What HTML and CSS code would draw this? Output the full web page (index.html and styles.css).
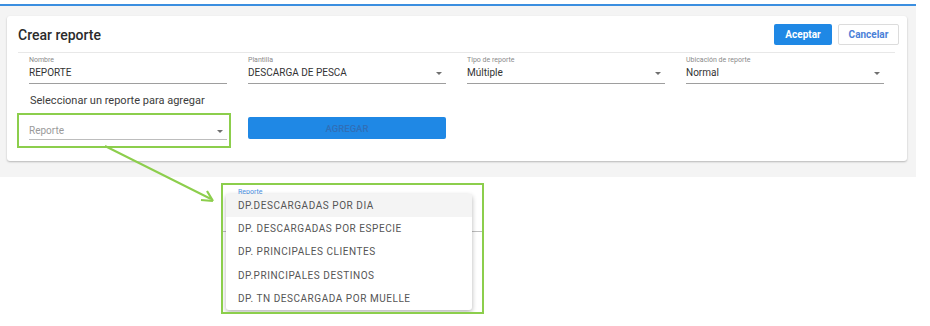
FILE: index.html
```html
<!DOCTYPE html>
<html lang="es">
<head>
    <meta charset="UTF-8">
    <title>Crear reporte</title>
    <link rel="stylesheet" href="styles.css">
</head>
<body>
    <div class="topline"></div>
    <div class="page">
        <div class="card">
            <div class="card-head">
                <h2>Crear reporte</h2>
                <div class="actions">
                    <button class="btn btn-primary">Aceptar</button>
                    <button class="btn btn-outline">Cancelar</button>
                </div>
            </div>
            <div class="divider"></div>

            <div class="fields">
                <div class="field">
                    <label>Nombre</label>
                    <div class="value">REPORTE</div>
                </div>
                <div class="field">
                    <label>Plantilla</label>
                    <div class="value">DESCARGA DE PESCA <span class="caret"></span></div>
                </div>
                <div class="field">
                    <label>Tipo de reporte</label>
                    <div class="value">Múltiple <span class="caret"></span></div>
                </div>
                <div class="field">
                    <label>Ubicación de reporte</label>
                    <div class="value">Normal <span class="caret"></span></div>
                </div>
            </div>

            <p class="hint">Seleccionar un reporte para agregar</p>

            <div class="add-row">
                <div class="field field-select">
                    <div class="value placeholder">Reporte <span class="caret"></span></div>
                </div>
                <button class="btn-add" disabled>AGREGAR</button>
            </div>
        </div>
    </div>

    <!-- annotations over the screenshot -->
    <div class="mark mark-select"></div>
    <svg class="pointer" width="120" height="64" viewBox="0 0 120 64">
        <line x1="2" y1="1" x2="108" y2="54" stroke="#8cce4c" stroke-width="2"/>
        <path d="M110 56 L98 55 M110 56 L104 46" stroke="#8cce4c" stroke-width="2.2" fill="none"/>
    </svg>
    <div class="mark mark-menu">
        <span class="menu-label">Reporte</span>
        <div class="menu-line"></div>
        <ul class="menu">
            <li class="active">DP.DESCARGADAS POR DIA</li>
            <li>DP. DESCARGADAS POR ESPECIE</li>
            <li>DP. PRINCIPALES CLIENTES</li>
            <li>DP.PRINCIPALES DESTINOS</li>
            <li>DP. TN DESCARGADA POR MUELLE</li>
        </ul>
    </div>
</body>
</html>
```

FILE: styles.css
```css
body {
    margin: 0;
    font-family: Roboto, "Liberation Sans", sans-serif;
    color: #333;
    background-color: #fff;
    position: relative;
    width: 930px;
    height: 326px;
    overflow: hidden;
}
.topline {
    margin-top: 4px;
    width: 916px;
    height: 2px;
    background-color: #3b8fe0;
}
.page {
    width: 916px;
    height: 171px;
    background-color: #f4f4f4;
    padding-top: 10px;
    box-sizing: border-box;
}
.card {
    margin-left: 7px;
    width: 900px;
    height: 145px;
    background-color: #fff;
    border-radius: 3px;
    box-shadow: 0 1px 2px rgba(0, 0, 0, 0.25);
}
.card-head {
    display: flex;
    justify-content: space-between;
    align-items: center;
    height: 36px;
    padding: 0 8px 0 11px;
}
.card-head h2 {
    margin: 2px 0 0;
    font-size: 14px;
    font-weight: 500;
    color: #2b2b2b;
}
.actions {
    display: flex;
    gap: 6px;
    margin-top: 1px;
}
.btn {
    height: 21px;
    font-family: inherit;
    font-size: 10px;
    font-weight: 700;
    border-radius: 2px;
    padding: 0;
    cursor: pointer;
}
.btn-primary {
    width: 58px;
    background-color: #1f88e5;
    color: #fff;
    border: none;
}
.btn-outline {
    width: 61px;
    background-color: #fff;
    color: #4a7fd8;
    border: 1px solid #dcdcdc;
}
.divider {
    margin: 0 12px 0 11px;
    height: 1px;
    background-color: #e8e8e8;
}
.fields {
    display: flex;
    gap: 21px;
    padding-left: 22px;
    margin-top: 3px;
}
.field {
    width: 198px;
    border-bottom: 1px solid #9e9e9e;
}
.field label {
    display: block;
    font-size: 7px;
    color: #8a8a8a;
    line-height: 9px;
}
.value {
    display: flex;
    justify-content: space-between;
    align-items: center;
    font-size: 10px;
    color: #333;
    line-height: 14px;
    padding: 1px 1px 3px 0;
}
.caret {
    width: 0;
    height: 0;
    border-left: 3.5px solid transparent;
    border-right: 3.5px solid transparent;
    border-top: 3.5px solid #707070;
    margin-right: 3px;
}
.hint {
    margin: 10px 0 0 23px;
    font-size: 11px;
    color: #3c3c3c;
    line-height: 13px;
}
.add-row {
    display: flex;
    gap: 21px;
    padding-left: 22px;
    align-items: flex-end;
    margin-top: 10px;
}
.field-select {
    border-bottom-color: #bdbdbd;
}
.placeholder {
    color: #9a9a9a;
    font-size: 10px;
    line-height: 12px;
    padding-bottom: 2px;
}
.btn-add {
    width: 198px;
    height: 22px;
    margin-bottom: 1px;
    background-color: #1f88e5;
    color: #2f6fb8;
    border: none;
    border-radius: 2px;
    font-family: inherit;
    font-size: 9.5px;
    font-weight: 500;
}

/* annotations */
.mark {
    position: absolute;
    border: 2px solid #8cce4c;
    box-sizing: border-box;
}
.mark-select {
    left: 17px;
    top: 113px;
    width: 214px;
    height: 35px;
}
.pointer {
    position: absolute;
    left: 103px;
    top: 145px;
}
.mark-menu {
    left: 221px;
    top: 183px;
    width: 263px;
    height: 131px;
    background-color: #fff;
    overflow: hidden;
}
.menu-label {
    position: absolute;
    left: 15px;
    top: 3px;
    font-size: 7px;
    color: #4a90e2;
}
.menu-line {
    position: absolute;
    left: 0;
    right: 0;
    top: 46px;
    height: 1px;
    background-color: #bdbdbd;
}
.menu {
    position: absolute;
    left: 3px;
    top: 9px;
    width: 246px;
    margin: 0;
    padding: 0;
    list-style: none;
    background-color: #fff;
    border-radius: 3px;
    box-shadow: 0 2px 5px rgba(0, 0, 0, 0.3);
}
.menu li {
    height: 23.2px;
    line-height: 23px;
    padding-left: 12px;
    font-size: 10px;
    letter-spacing: 0.55px;
    color: #555;
}
.menu li.active {
    background-color: #f4f4f4;
}
```
